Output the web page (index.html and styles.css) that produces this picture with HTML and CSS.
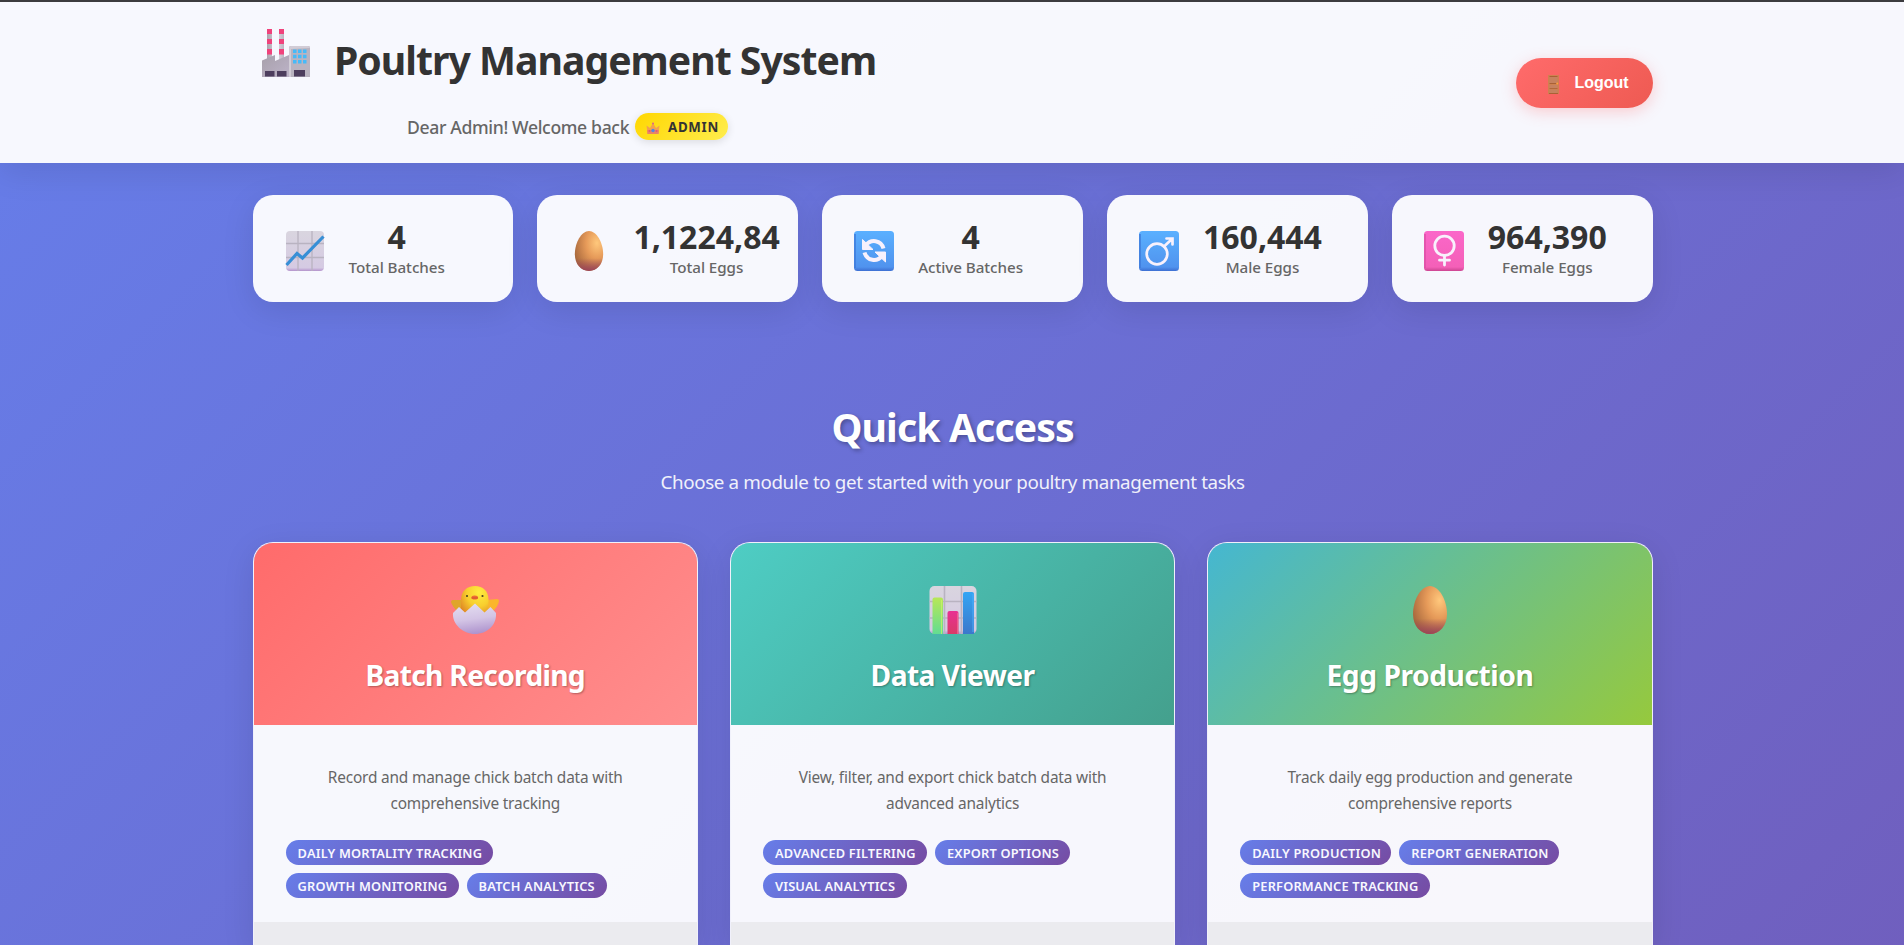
FILE: index.html
```html
<!DOCTYPE html>
<html lang="en">
<head>
<meta charset="utf-8">
<title>Poultry Management System</title>
<link rel="stylesheet" href="styles.css">
</head>
<body>
<svg width="0" height="0" class="defs" aria-hidden="true">
  <defs>
    <radialGradient id="eggG" cx=".78" cy=".3" r=".85"><stop offset="0" stop-color="#ffc87c"/><stop offset=".45" stop-color="#e69a59"/><stop offset="1" stop-color="#a7683d"/></radialGradient>
    <linearGradient id="eggB" x1="0" y1="0" x2="0" y2="1"><stop offset=".68" stop-color="#9b4459" stop-opacity="0"/><stop offset="1" stop-color="#9b4459"/></linearGradient>
    <linearGradient id="blueG" x1="0" y1="0" x2="0" y2="1"><stop offset="0" stop-color="#5ab0ff"/><stop offset=".9" stop-color="#5093ee"/><stop offset="1" stop-color="#3d6fd2"/></linearGradient>
    <linearGradient id="pinkG" x1="0" y1="0" x2="0" y2="1"><stop offset="0" stop-color="#fb67c9"/><stop offset=".9" stop-color="#f460b8"/><stop offset="1" stop-color="#cc4592"/></linearGradient>
    <linearGradient id="paperG" x1="0" y1="0" x2="0" y2="1"><stop offset="0" stop-color="#d9d5df"/><stop offset=".92" stop-color="#d5cae3"/><stop offset="1" stop-color="#b493cc"/></linearGradient>
    <symbol id="egg" viewBox="0 0 35 48"><path d="M17.500 0C26.500 0 34.500 14 34.500 28C34.500 40 27 48 17.500 48S.5 40 .5 28C.5 14 8.500 0 17.500 0Z" fill="url(#eggG)"/><path d="M17.500 0C26.500 0 34.500 14 34.500 28C34.500 40 27 48 17.500 48S.5 40 .5 28C.5 14 8.500 0 17.500 0Z" fill="url(#eggB)"/></symbol>
  </defs>
</svg>
<header class="header">
  <div class="header-inner">
    <div class="brand">
      <div class="brand-row">
        <svg class="factory" viewBox="0 0 48 48">
          <defs><linearGradient id="stk" x1="0" x2="1"><stop offset="0" stop-color="#aaa3ad"/><stop offset=".6" stop-color="#dcd7e0"/><stop offset="1" stop-color="#bbb5c0"/></linearGradient><linearGradient id="bld" x1="0" y1="0" x2="1" y2="1"><stop offset="0" stop-color="#a7a0ab"/><stop offset="1" stop-color="#bdb3c8"/></linearGradient></defs>
          <path d="M5 0h5v32H5zM17 0h5v32h-5z" fill="url(#stk)"/>
          <path d="M5 0h5v5H5zM5 10h5v5H5zM5 20h5v5.500H5zM17 0h5v5h-5zM17 10h5v5h-5zM17 20h5v5.500h-5z" fill="#f0437c"/>
          <path d="M0 48V31.500L13 26v6l14-6v22Z" fill="url(#bld)"/>
          <path d="M27 48V18.500q0-1.500 1.500-1.500H46.500q1.500 0 1.500 1.500V48Z" fill="#b9b3c0"/><path d="M27 19q0-2 2-2h17q2 0 2 2l-19 1v28h-2Z" fill="#d1ccd6"/>
          <path d="M3 42h9.500v5.500H3zM15 42h9.500v5.500H15zM32 41h11v6.500H32z" fill="#4d3e5e"/>
          <path d="M31 20.500h3.500V24H31zM36 20.500h3.500V24H36zM41 20.500h3.500V24H41zM31 25.700h3.500v3.500H31zM36 25.700h3.500v3.500H36zM41 25.700h3.500v3.500H41zM31 31h3.500v3.500H31zM36 31h3.500v3.500H36zM41 31h3.500v3.500H41z" fill="#46baf8"/>
        </svg>
        <h1 class="t-brand">Poultry Management System</h1>
      </div>
      <div class="welcome"><span class="t-welcome">Dear Admin! Welcome back</span>
        <span class="badge">
          <svg class="crown" viewBox="0 0 14 13"><path d="M.5 3.500 4 6 7 1l3 5 3.500-2.500L12.500 12h-11Z" fill="#f3a04f"/><path d="M1 8h12l-.5 4h-11Z" fill="#e98563"/><circle cx="7" cy="8.500" r="1.700" fill="#4f86e0"/><circle cx="7" cy="1.500" r="1" fill="#d9658b"/><circle cx="3.500" cy="9" r="1" fill="#de5283"/><circle cx="10.500" cy="9" r="1" fill="#de5283"/></svg>
          <span class="t-admin">ADMIN</span>
        </span>
      </div>
    </div>
    <button class="logout">
      <svg class="door" viewBox="0 0 11 19"><path d="M0 0h11v19H0z" fill="#cf8150"/><path d="M1.500 1.500h8V8h-8zM1.500 10h8v3h-8zM1.500 14.500h8V18h-8z" fill="#c6825f"/><path d="M1.500 1h8v1h-8zM1.500 8h8v1h-8zM1.500 13h8v.8h-8zM1 18h9v1H1z" fill="#a96135"/><circle cx="9.200" cy="8.500" r="1" fill="#ffa23d"/></svg>
      <span>Logout</span>
    </button>
  </div>
</header>
<main class="main">
  <section class="stats">
    <div class="stat">
      <svg class="stat-icon" viewBox="0 0 40 40"><rect x="1" width="38" height="40" rx="4" fill="url(#paperG)"/><path d="M13 0v40M27 0v40M1 12.500h38M1 26.500h38" stroke="#b9b3c1" stroke-width="1.300"/><path d="M1.500 34 12 22.500 17.500 27 38.500 5.500" fill="none" stroke="#378fd6" stroke-width="3.200"/></svg>
      <div class="stat-text"><div class="num">4</div><div class="lab">Total Batches</div></div>
    </div>
    <div class="stat">
      <svg class="stat-icon" viewBox="0 0 40 40"><use href="#egg" x="5" y="0" width="30" height="40"/></svg>
      <div class="stat-text"><div class="num">1,1224,84</div><div class="lab">Total Eggs</div></div>
    </div>
    <div class="stat">
      <svg class="stat-icon" viewBox="0 0 40 40"><rect width="40" height="40" rx="3.500" fill="url(#blueG)"/><path d="M1 3v34" stroke="#3c78d8" stroke-width="2" stroke-opacity=".7"/><g fill="none" stroke="#f8f1fc" stroke-width="4"><path d="M11.500 14.500C17 7.500 27 9 29.500 17.500"/><path d="M28.500 24.500C23 31.500 13 30 10.500 21.500"/></g><path d="M8.500 8.500v10h10.500ZM31.500 31V21H21Z" fill="#f8f1fc" stroke="#f8f1fc" stroke-linejoin="round"/></svg>
      <div class="stat-text"><div class="num">4</div><div class="lab">Active Batches</div></div>
    </div>
    <div class="stat">
      <svg class="stat-icon" viewBox="0 0 40 40"><rect width="40" height="40" rx="3.500" fill="url(#blueG)"/><path d="M1 3v34" stroke="#3c78d8" stroke-width="2" stroke-opacity=".7"/><g fill="none" stroke="#f8f1fc" stroke-width="2.700" stroke-linecap="round"><circle cx="18" cy="23" r="10.300"/><path d="M25 15.500 33 8M27.500 7.500H33.500V13.500"/></g></svg>
      <div class="stat-text"><div class="num">160,444</div><div class="lab">Male Eggs</div></div>
    </div>
    <div class="stat">
      <svg class="stat-icon" viewBox="0 0 40 40"><rect width="40" height="40" rx="3.500" fill="url(#pinkG)"/><path d="M1 3v34" stroke="#dc4fa5" stroke-width="2" stroke-opacity=".7"/><g fill="none" stroke="#f8f1fc" stroke-width="2.800" stroke-linecap="round"><circle cx="20.500" cy="14.800" r="9.700"/><path d="M20.500 25v9M15.500 29.200h10"/></g></svg>
      <div class="stat-text"><div class="num">964,390</div><div class="lab">Female Eggs</div></div>
    </div>
  </section>
  <section class="intro">
    <h2 class="t-quick">Quick Access</h2>
    <p class="t-sub">Choose a module to get started with your poultry management tasks</p>
  </section>
  <section class="modules">
    <article class="module">
      <div class="module-head coral">
        <svg class="module-icon" viewBox="0 0 48 48">
          <defs><radialGradient id="chk" cx=".65" cy=".2" r=".8"><stop offset="0" stop-color="#ffec3f"/><stop offset=".55" stop-color="#f8ce2e"/><stop offset="1" stop-color="#e08a25"/></radialGradient><linearGradient id="shl" x1=".4" y1="0" x2=".6" y2="1"><stop offset="0" stop-color="#e3dcf0"/><stop offset=".5" stop-color="#d3c4e5"/><stop offset="1" stop-color="#ac91cc"/></linearGradient></defs>
          <path d="M0 16q0-2 2-2h10v12H7Q1 20 0 16Z" fill="#dfa52a"/><path d="M48 15q0-2-2-2L36 14v12h5q6-5 7-11Z" fill="#fbb52c"/>
          <path d="M10 32V14C10 5 16 0 24 0s13.500 5 13.500 14v18Z" fill="url(#chk)"/>
          <path d="m2 27 6-6 6 5.500L24 17.500l9.500 9 6-5.500 5.500 6C46 39 36 48 24 48S1 38 2 27Z" fill="url(#shl)"/>
          <ellipse cx="23.700" cy="11.500" rx="3.300" ry="2" fill="#ee6c32"/><path d="M20.500 12h6.500" stroke="#c6492e" stroke-width=".7"/><circle cx="16" cy="10" r="1.100" fill="#4c4321"/><circle cx="31.500" cy="10" r="1.100" fill="#4c4321"/>
        </svg>
        <h3 class="t-batch">Batch Recording</h3>
      </div>
      <div class="module-body">
        <p>Record and manage chick batch data with<br>comprehensive tracking</p>
        <div class="tags"><span class="tag w1">Daily Mortality Tracking</span><span class="tag w2">Growth Monitoring</span><span class="tag w3">Batch Analytics</span></div>
      </div>
      <div class="module-foot"></div>
    </article>
    <article class="module">
      <div class="module-head teal">
        <svg class="module-icon" viewBox="0 0 48 48">
          <defs><linearGradient id="gr" x1="0" y1="0" x2="0" y2="1"><stop offset="0" stop-color="#b8e757"/><stop offset="1" stop-color="#63dd92"/></linearGradient><linearGradient id="rd" x1="0" y1="0" x2="0" y2="1"><stop offset="0" stop-color="#e83193"/><stop offset="1" stop-color="#d93b68"/></linearGradient><linearGradient id="bl" x1="0" y1="0" x2="0" y2="1"><stop offset="0" stop-color="#34a5f4"/><stop offset="1" stop-color="#3b78cb"/></linearGradient></defs>
          <rect x=".5" width="47" height="48" rx="5" fill="url(#paperG)"/><path d="M15.500 0v48M32.500 0v48M.5 15.500h47M.5 32h47" stroke="#b9b3c1" stroke-width="1.600"/>
          <path d="M3.500 48V13.500q0-2 2-2H12q2 0 2 2V48Z" fill="url(#gr)"/><path d="M18.500 48V27q0-2 2-2H27.500q2 0 2 2V48Z" fill="url(#rd)"/><path d="M34 48V8q0-2 2-2h7q2 0 2 2V48Z" fill="url(#bl)"/>
          <path d="M12.500 14v34" stroke="#cef26a" stroke-opacity=".7"/><path d="M28.500 27v21" stroke="#f4668f" stroke-opacity=".8"/><path d="M44 8v38" stroke="#54b4ff" stroke-opacity=".8"/>
        </svg>
        <h3 class="t-data">Data Viewer</h3>
      </div>
      <div class="module-body">
        <p>View, filter, and export chick batch data with<br>advanced analytics</p>
        <div class="tags"><span class="tag w4">Advanced Filtering</span><span class="tag w5">Export Options</span><span class="tag w6">Visual Analytics</span></div>
      </div>
      <div class="module-foot"></div>
    </article>
    <article class="module">
      <div class="module-head lime">
        <svg class="module-icon" viewBox="0 0 48 48"><use href="#egg" x="6.500" y="0" width="35" height="48"/></svg>
        <h3 class="t-egg">Egg Production</h3>
      </div>
      <div class="module-body">
        <p>Track daily egg production and generate<br>comprehensive reports</p>
        <div class="tags"><span class="tag w7">Daily Production</span><span class="tag w8">Report Generation</span><span class="tag w9">Performance Tracking</span></div>
      </div>
      <div class="module-foot"></div>
    </article>
  </section>
</main>
</body>
</html>
```
FILE: styles.css
```css
* { box-sizing: border-box; margin: 0; padding: 0; }
html { overflow: hidden; }
body {
  height: 945px;
  overflow: hidden;
  font-family: "Noto Sans", "Open Sans", sans-serif;
  color: #333;
  background: linear-gradient(135deg, #667eea 0%, #764ba2 100%) 0 0 / 100% 2800px no-repeat;
}
svg { display: block; flex: none; }
.defs { position: absolute; }
h1, h2, h3, p, span { white-space: nowrap; }

.header {
  height: 163px;
  border-top: 2px solid #3c3c3f;
  background: rgba(255, 255, 255, .95);
  box-shadow: 0 8px 32px rgba(0, 0, 0, .1);
}
.header-inner {
  width: 1401px;
  margin: 0 auto;
  padding-left: .5px;
  height: 161px;
  display: flex;
  justify-content: space-between;
}
.brand { padding: 27px 0 0 10px; }
.brand-row { display: flex; gap: 24px; align-items: flex-start; }
.factory { width: 48px; height: 48px; }
.t-brand { font-size: 39.2px; line-height: 54px; padding-top: 4px; height: 59px; letter-spacing: -1px; }
.welcome { display: flex; align-items: center; gap: 7px; padding: 25px 0 0 145px; height: 52px; }
.t-welcome { font-size: 17.6px; font-weight: 500; color: #666; line-height: 24px; width: 221px; letter-spacing: -.35px; }
.badge {
  width: 93px; height: 27px; padding-left: 11px;
  display: flex; align-items: center; gap: 8px;
  border-radius: 14px;
  background: linear-gradient(135deg, #ffd700, #ffed4e);
  box-shadow: 0 2px 8px rgba(0, 0, 0, .12);
}
.crown { width: 14px; height: 13px; margin-top: 4px; }
.t-admin { font-size: 13.3px; font-weight: 700; letter-spacing: .7px; padding-top: 1px; }
.logout {
  width: 137px; height: 50px; margin: 56px 0 0; padding-left: 32px;
  border: 0; border-radius: 25px; color: #fff;
  display: flex; align-items: center; gap: 16px;
  font: bold 16px "Liberation Sans", Arial, sans-serif;
  background: linear-gradient(135deg, #ff6b6b, #ee5a52);
  box-shadow: 0 4px 15px rgba(255, 107, 107, .3);
}
.door { width: 11px; height: 19px; margin-top: 2px; }

.main { width: 1402px; margin: 0 auto; padding: 32px 0 0 1.6px; }
.stats { width: 1400px; display: grid; grid-template-columns: repeat(5, 1fr); gap: 24px; }
.stat {
  height: 107px; padding-left: 32px;
  display: flex; align-items: center; gap: 24px;
  border-radius: 20px;
  background: rgba(255, 255, 255, .95);
  box-shadow: 0 8px 32px rgba(0, 0, 0, .1);
}
.stat-icon { width: 40px; height: 40px; margin-top: 4px; }
.stat-text { text-align: center; white-space: nowrap; padding-top: 2px; }
.num { font-size: 32px; font-weight: 700; line-height: 32px; }
.lab { font-size: 15.2px; font-weight: 500; line-height: 22px; color: #666; padding-top: 3px; letter-spacing: -.05px; }

.intro { width: 1400px; text-align: center; color: #fff; padding-top: 98px; height: 240px; }
.t-quick { font-size: 39.2px; line-height: 54px; letter-spacing: -.9px; text-shadow: 2px 2px 4px rgba(0, 0, 0, .3); }
.t-sub { font-size: 18.8px; line-height: 26px; padding-top: 15px; letter-spacing: -.38px; opacity: .9; }

.modules { width: 1400px; display: grid; grid-template-columns: repeat(3, 1fr); gap: 32px; }
.module {
  height: 403px; overflow: hidden;
  border: 1px solid rgba(255, 255, 255, .9); border-bottom: 0;
  border-radius: 20px 20px 0 0;
  background: rgba(255, 255, 255, .95) padding-box;
  box-shadow: 0 8px 32px rgba(0, 0, 0, .1);
}
.module-head { height: 182px; padding-top: 43px; display: flex; flex-direction: column; align-items: center; color: #fff; }
.coral { background: linear-gradient(135deg, #ff6b6b, #ff8e8e); }
.teal { background: linear-gradient(135deg, #4ecdc4, #44a08d); }
.lime { background: linear-gradient(135deg, #45b7d1, #96c93d); }
.module-icon { width: 48px; height: 48px; }
.module h3 { font-size: 28.2px; line-height: 40px; margin-top: 21px; text-shadow: 1px 1px 2px rgba(0, 0, 0, .3); }
.module .t-batch { letter-spacing: -.7px; }
.module .t-data { letter-spacing: -.6px; }
.module .t-egg { letter-spacing: -.45px; }
.module-body { height: 197px; padding: 40px 32px 0; }
.module-body p { font-size: 15.4px; line-height: 26px; color: #666; text-align: center; letter-spacing: -.18px; }
.tags { display: flex; flex-wrap: wrap; gap: 8px; margin-top: 23px; }
.tag {
  height: 25px; border-radius: 13px; padding-left: 12px;
  font-size: 12.8px; font-weight: 600; line-height: 26px; letter-spacing: .2px;
  text-transform: uppercase; color: #f8f8ff;
  background: linear-gradient(135deg, #667eea, #764ba2);
}
.module-foot { height: 23px; background: #ebebef; }
.w1 { width: 207px; }
.w2 { width: 173px; }
.w3 { width: 140px; }
.w4 { width: 164px; }
.w5 { width: 135px; }
.w6 { width: 144px; }
.w7 { width: 151px; }
.w8 { width: 160px; }
.w9 { width: 190px; }
```
